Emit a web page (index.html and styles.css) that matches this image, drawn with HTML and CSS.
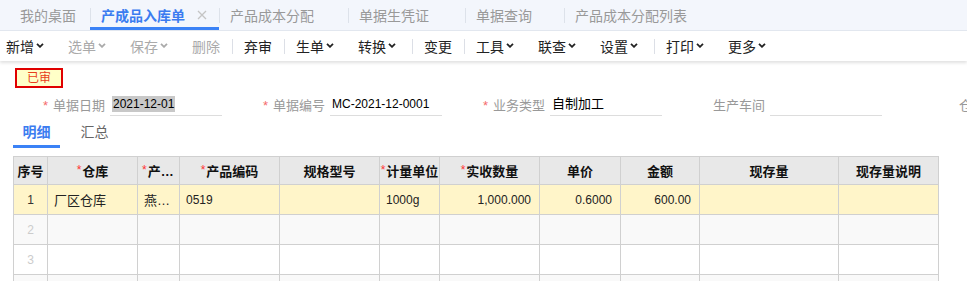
FILE: index.html
```html
<!DOCTYPE html>
<html lang="zh-CN">
<head>
  <meta charset="UTF-8" />
  <title>产成品入库单</title>
  <link rel="stylesheet" href="styles.css">
</head>
<body>

  <div class="tabbar">
    <div class="tab home">我的桌面</div>
    <div class="tab active">产成品入库单
      <svg class="close" width="10" height="10" viewBox="0 0 10 10"><path d="M1 1L9 9M9 1L1 9" stroke="#c4c4c4" stroke-width="1.3" fill="none"/></svg>
    </div>
    <div class="tab">产品成本分配</div>
    <div class="tab w4">单据生凭证</div>
    <div class="tab w5">单据查询</div>
    <div class="tab">产品成本分配列表</div>
  </div>

  <div class="toolbar">
    <div class="group">
      <span class="tool">新增<svg width="12" height="5" viewBox="0 0 12 5"><polyline points="1,0.8 4,3.8 7,0.8" /></svg></span>
      <span class="tool off">选单<svg width="12" height="5" viewBox="0 0 12 5"><polyline points="1,0.8 4,3.8 7,0.8" /></svg></span>
      <span class="tool off">保存<svg width="12" height="5" viewBox="0 0 12 5"><polyline points="1,0.8 4,3.8 7,0.8" /></svg></span>
      <span class="tool off">删除</span>
    </div>
    <span class="sep"></span>
    <div class="group">
      <span class="tool">弃审</span>
    </div>
    <span class="sep"></span>
    <div class="group">
      <span class="tool">生单<svg width="12" height="5" viewBox="0 0 12 5"><polyline points="1,0.8 4,3.8 7,0.8" /></svg></span>
      <span class="tool">转换<svg width="12" height="5" viewBox="0 0 12 5"><polyline points="1,0.8 4,3.8 7,0.8" /></svg></span>
    </div>
    <span class="sep"></span>
    <div class="group">
      <span class="tool">变更</span>
    </div>
    <span class="sep"></span>
    <div class="group">
      <span class="tool">工具<svg width="12" height="5" viewBox="0 0 12 5"><polyline points="1,0.8 4,3.8 7,0.8" /></svg></span>
      <span class="tool">联查<svg width="12" height="5" viewBox="0 0 12 5"><polyline points="1,0.8 4,3.8 7,0.8" /></svg></span>
      <span class="tool">设置<svg width="12" height="5" viewBox="0 0 12 5"><polyline points="1,0.8 4,3.8 7,0.8" /></svg></span>
    </div>
    <span class="sep"></span>
    <div class="group">
      <span class="tool">打印<svg width="12" height="5" viewBox="0 0 12 5"><polyline points="1,0.8 4,3.8 7,0.8" /></svg></span>
      <span class="tool">更多<svg width="12" height="5" viewBox="0 0 12 5"><polyline points="1,0.8 4,3.8 7,0.8" /></svg></span>
    </div>
  </div>

  <div class="badge">已审</div>

  <div class="form">
    <div class="field">
      <span class="label"><span class="req">*</span>单据日期</span>
      <span class="input"><span class="selected">2021-12-01</span></span>
    </div>
    <div class="field">
      <span class="label"><span class="req">*</span>单据编号</span>
      <span class="input">MC-2021-12-0001</span>
    </div>
    <div class="field">
      <span class="label"><span class="req">*</span>业务类型</span>
      <span class="input cn">自制加工</span>
    </div>
    <div class="field">
      <span class="label">生产车间</span>
      <span class="input"></span>
    </div>
    <div class="field">
      <span class="label">仓库</span>
      <span class="input"></span>
    </div>
  </div>

  <div class="subtabs">
    <div class="subtab active">明细</div>
    <div class="subtab">汇总</div>
  </div>

  <table class="grid">
    <colgroup>
      <col style="width:34px"><col style="width:90px"><col style="width:42px"><col style="width:100px">
      <col style="width:100px"><col style="width:60px"><col style="width:100px"><col style="width:81px">
      <col style="width:79px"><col style="width:139px"><col style="width:100px">
    </colgroup>
    <thead>
      <tr>
        <th class="idx">序号</th>
        <th><span class="star">*</span>仓库</th>
        <th><span class="star">*</span>产品名称</th>
        <th><span class="star">*</span>产品编码</th>
        <th>规格型号</th>
        <th class="tight"><span class="star">*</span>计量单位</th>
        <th><span class="star">*</span>实收数量</th>
        <th>单价</th>
        <th>金额</th>
        <th>现存量</th>
        <th>现存量说明</th>
      </tr>
    </thead>
    <tbody>
      <tr class="current">
        <td class="idx">1</td>
        <td>厂区仓库</td>
        <td>燕麦片</td>
        <td class="num-l">0519</td>
        <td></td>
        <td class="num-l">1000g</td>
        <td class="num">1,000.000</td>
        <td class="num">0.6000</td>
        <td class="num">600.00</td>
        <td></td>
        <td></td>
      </tr>
      <tr>
        <td class="idx">2</td><td></td><td></td><td></td><td></td><td></td><td></td><td></td><td></td><td></td><td></td>
      </tr>
      <tr>
        <td class="idx">3</td><td></td><td></td><td></td><td></td><td></td><td></td><td></td><td></td><td></td><td></td>
      </tr>
      <tr>
        <td class="idx">4</td><td></td><td></td><td></td><td></td><td></td><td></td><td></td><td></td><td></td><td></td>
      </tr>
    </tbody>
  </table>

</body>
</html>
```

FILE: styles.css
```css
body {
  margin: 0;
  width: 967px;
  height: 281px;
  overflow: hidden;
  font-family: "Liberation Sans", "Noto Sans CJK SC", sans-serif;
  font-size: 14px;
  color: #333;
  background: #fff;
}

/* page tabs */
.tabbar {
  display: flex;
  height: 30px;
  background: #f3f6fc;
  border-bottom: 1px solid #e3e8f0;
}
.tab {
  position: relative;
  display: flex;
  align-items: center;
  flex: none;
  height: 30px;
  padding: 0 34px 0 11px;
  color: #999;
  white-space: nowrap;
}
.tab + .tab::before {
  content: "";
  position: absolute;
  left: 0;
  top: 8px;
  width: 1px;
  height: 15px;
  background: #dde2ea;
}
.tab.home {
  padding: 0 14px 0 20px;
}
.tab.w4 {
  padding-right: 36px;
}
.tab.w5 {
  padding-right: 32px;
}
.tab.active {
  color: #3b7cf0;
  font-weight: bold;
  padding-right: 12px;
  box-shadow: inset 0 -3px 0 #3b82f6;
}
.tab .close {
  margin-left: 12px;
}

/* toolbar */
.toolbar {
  position: relative;
  display: flex;
  align-items: center;
  height: 30px;
  padding-left: 6px;
  background: #fff;
  box-shadow: 0 2px 3px rgba(0, 0, 0, 0.12);
}
.group {
  display: flex;
  gap: 20px;
}
.tool {
  display: flex;
  align-items: center;
  color: #222;
  white-space: nowrap;
}
.tool svg {
  margin-left: 2px;
  margin-top: -1px;
  fill: none;
  stroke: #222;
  stroke-width: 1.8;
}
.tool.off {
  color: #aaa;
}
.tool.off svg {
  stroke: #aaa;
}
.sep {
  width: 1px;
  height: 15px;
  background: #dcdfe6;
  margin: 0 11px 0 12px;
}

/* status */
.badge {
  width: 48px;
  height: 20px;
  box-sizing: border-box;
  margin: 7px 0 0 15px;
  border: 2px solid #e00000;
  background: #ffffc8;
  color: #e8401c;
  font-size: 12px;
  line-height: 16px;
  text-align: center;
}

/* header fields */
.form {
  display: flex;
  margin-top: 5px;
  padding-left: 5px;
  white-space: nowrap;
}
.field {
  display: flex;
  align-items: center;
  flex: none;
  width: 220px;
}
.label {
  width: 100px;
  text-align: right;
  color: #999;
  font-size: 13px;
}
.req {
  color: #f56c6c;
  margin-right: 5px;
}
.input {
  width: 112px;
  height: 23px;
  box-sizing: border-box;
  margin-left: 5px;
  padding: 2px 0 0 2px;
  border-bottom: 1px solid #ddd;
  font-size: 12px;
  line-height: 18px;
  color: #000;
}
.input.cn {
  font-size: 13px;
}
.selected {
  background: #c8c8c8;
  padding: 1px 1px;
}

/* detail tabs */
.subtabs {
  display: flex;
  gap: 11px;
  margin: 1px 0 0 13px;
  height: 31px;
}
.subtab {
  width: 47px;
  text-align: center;
  line-height: 31px;
  color: #666;
  font-size: 14px;
}
.subtab.active {
  color: #3b7cf0;
  font-weight: bold;
  box-shadow: inset 0 -3px 0 #3b82f6;
}

/* grid */
.grid {
  margin: 8px 0 0 13px;
  border-collapse: collapse;
  table-layout: fixed;
  width: 926px;
}
.grid th,
.grid td {
  border: 1px solid #d0d0d0;
  padding: 0 6px;
  overflow: hidden;
  white-space: nowrap;
  text-overflow: ellipsis;
  font-size: 13px;
}
.grid th {
  height: 27px;
  padding: 0 4px;
  background: #e8e8e8;
  color: #111;
  font-weight: bold;
  text-align: center;
}
.grid th.idx,
.grid th.tight {
  padding: 0;
}
.grid td {
  height: 29px;
  color: #222;
}
.star {
  color: #f33;
  font-weight: normal;
  font-size: 12px;
  vertical-align: 2px;
  margin-right: 1px;
}
.grid tbody tr:nth-child(even) td {
  background: #f9f9f9;
}
.grid tr.current td {
  background: #fff5c9;
}
.grid td.idx {
  text-align: center;
  color: #ccc;
  font-size: 12px;
  padding: 0;
}
.grid tr.current td.idx {
  color: #333;
}
.grid td.num {
  text-align: right;
  padding-right: 8px;
  font-size: 12px;
}
.grid td.num-l {
  font-size: 12px;
}
```
